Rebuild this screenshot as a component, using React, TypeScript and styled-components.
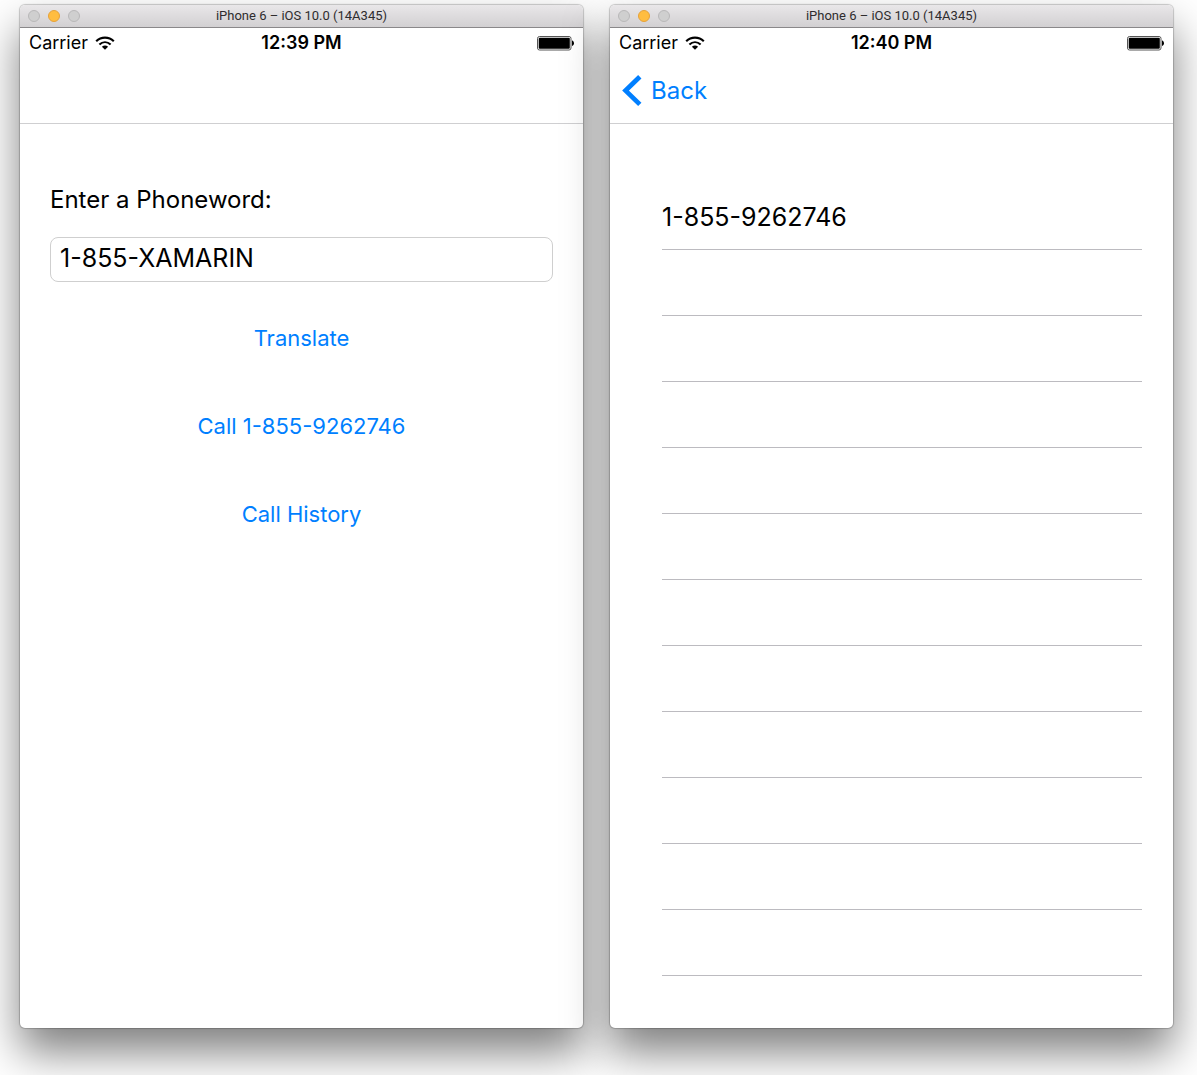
import React, { useState } from 'react';
import styled, { createGlobalStyle } from 'styled-components';

const BLUE = '#007fff';

const GlobalStyle = createGlobalStyle`
  *, *::before, *::after { box-sizing: border-box; }
  html { overflow-x: hidden; }
  body {
    margin: 0;
    background: #fff;
    color: #000;
    font-family: Inter, Roboto, "Liberation Sans", sans-serif;
  }
`;

const Desktop = styled.main`
  display: grid;
  grid-template-columns: repeat(2, minmax(0, 1fr));
  gap: 27px;
  padding: 5px 24px 47px 20px;
  overflow: hidden;
`;

const Window = styled.section`
  display: flex;
  flex-direction: column;
  border-radius: 5px;
  background: #fff;
  box-shadow: 0 0 1px 1px rgba(0, 0, 0, 0.2), 0 24px 44px rgba(0, 0, 0, 0.5);
`;

const TitleBar = styled.header`
  display: grid;
  grid-template-columns: 1fr auto 1fr;
  align-items: center;
  height: 23px;
  padding: 0 8px;
  border-bottom: 1px solid #8a888a;
  border-radius: 5px 5px 0 0;
  background: linear-gradient(#e9e7e9, #d2d0d2);
`;

const Lights = styled.div`
  display: flex;
  gap: 8px;
`;

const Light = styled.button<{ $active?: boolean }>`
  width: 12px;
  height: 12px;
  padding: 0;
  border: 1px solid ${(p) => (p.$active ? '#e6a23a' : '#b9b8b9')};
  border-radius: 50%;
  background: ${(p) => (p.$active ? '#ffbd41' : '#cfcfcf')};
`;

const Title = styled.h1`
  margin: 0;
  font: 400 13px/16px Roboto, sans-serif;
  color: #2e2c2e;
  white-space: nowrap;
`;

const StatusBar = styled.div`
  display: grid;
  grid-template-columns: 1fr auto 1fr;
  align-items: center;
  height: 30px;
  padding: 0 9px;
  font-size: 18px;
  line-height: 20px;
`;

const Carrier = styled.span`
  display: flex;
  align-items: center;
  gap: 7px;
`;

const Clock = styled.time`
  font-weight: 600;
`;

const BatterySlot = styled.span`
  display: flex;
  justify-content: flex-end;
`;

const NavBar = styled.nav`
  display: flex;
  align-items: center;
  height: 66px;
  padding: 0 12px;
  border-bottom: 1px solid #cfcfd1;
`;

const BackButton = styled.button`
  display: flex;
  align-items: center;
  gap: 9px;
  padding: 0;
  border: 0;
  background: none;
  color: ${BLUE};
  font: 400 24px/32px Inter, sans-serif;
`;

const Form = styled.form`
  display: flex;
  flex-direction: column;
  align-items: center;
  padding: 60px 30px;
`;

const Label = styled.label`
  align-self: flex-start;
  margin-bottom: 22px;
  font-size: 24px;
  line-height: 31px;
`;

const TextField = styled.input`
  width: 100%;
  height: 45px;
  margin-bottom: 34px;
  padding: 0 9px 3px;
  border: 1px solid #cfcfcf;
  border-radius: 8px;
  background: #fff;
  color: #000;
  font: 400 25px/31px Inter, sans-serif;
`;

const Actions = styled.div`
  display: flex;
  flex-direction: column;
  align-items: center;
  gap: 44px;
`;

const Action = styled.button`
  height: 44px;
  padding: 0;
  border: 0;
  background: none;
  color: ${BLUE};
  font: 400 22px/28px Inter, sans-serif;
`;

const List = styled.ul`
  margin: 0;
  padding: 60px 31px 52px 52px;
  list-style: none;
`;

const Row = styled.li`
  display: flex;
  align-items: center;
  height: 66px;
  padding-top: 2px;
  border-bottom: 1px solid #bcbbc0;
  font-size: 25px;
  line-height: 31px;
`;

const Wifi = () => (
  <svg width="20" height="14" viewBox="0 0 20 14" aria-hidden="true">
    <g fill="none" stroke="#000" strokeWidth="2.2">
      <path d="M1.2 5.2C6.2.4 13.8.4 18.8 5.2" />
      <path d="M4.4 8.5c3.3-3 7.9-3 11.2 0" />
    </g>
    <path d="M6.9 10.7c1.8-1.6 4.4-1.6 6.2 0L10 13.7z" />
  </svg>
);

const Battery = () => (
  <svg width="37" height="15" viewBox="0 0 37 15" aria-hidden="true">
    <rect x=".5" y=".5" width="33.5" height="13.5" rx="2" fill="#fff" stroke="#555" />
    <rect x="1.7" y="1.7" width="31.1" height="11.1" rx="1" />
    <path d="M35 4.6c2.6.4 2.6 5 0 5.4z" />
  </svg>
);

const Chevron = () => (
  <svg width="20" height="32" viewBox="0 0 20 32" aria-hidden="true">
    <path d="M17.8 1.8 3.6 15.6l14.2 13.8" fill="none" stroke={BLUE} strokeWidth="4.8" />
  </svg>
);

function Simulator({ time, nav, children }: {
  time: string;
  nav?: React.ReactNode;
  children: React.ReactNode;
}) {
  return (
    <Window>
      <TitleBar>
        <Lights>
          <Light aria-label="Close" />
          <Light aria-label="Minimize" $active />
          <Light aria-label="Zoom" />
        </Lights>
        <Title>iPhone 6 – iOS 10.0 (14A345)</Title>
      </TitleBar>
      <StatusBar>
        <Carrier>Carrier <Wifi /></Carrier>
        <Clock>{time}</Clock>
        <BatterySlot><Battery /></BatterySlot>
      </StatusBar>
      <NavBar>{nav}</NavBar>
      {children}
    </Window>
  );
}

const calls = ['1-855-9262746', ...Array<string>(11).fill('')];

export default function App() {
  const [word, setWord] = useState('1-855-XAMARIN');
  return (
    <>
      <GlobalStyle />
      <Desktop>
        <Simulator time="12:39 PM">
          <Form onSubmit={(e) => e.preventDefault()}>
            <Label htmlFor="phoneword">Enter a Phoneword:</Label>
            <TextField id="phoneword" value={word} onChange={(e) => setWord(e.target.value)} />
            <Actions>
              <Action type="submit">Translate</Action>
              <Action type="button">Call 1-855-9262746</Action>
              <Action type="button">Call History</Action>
            </Actions>
          </Form>
        </Simulator>
        <Simulator time="12:40 PM" nav={<BackButton><Chevron />Back</BackButton>}>
          <List>
            {calls.map((call, i) => <Row key={i}>{call}</Row>)}
          </List>
        </Simulator>
      </Desktop>
    </>
  );
}
